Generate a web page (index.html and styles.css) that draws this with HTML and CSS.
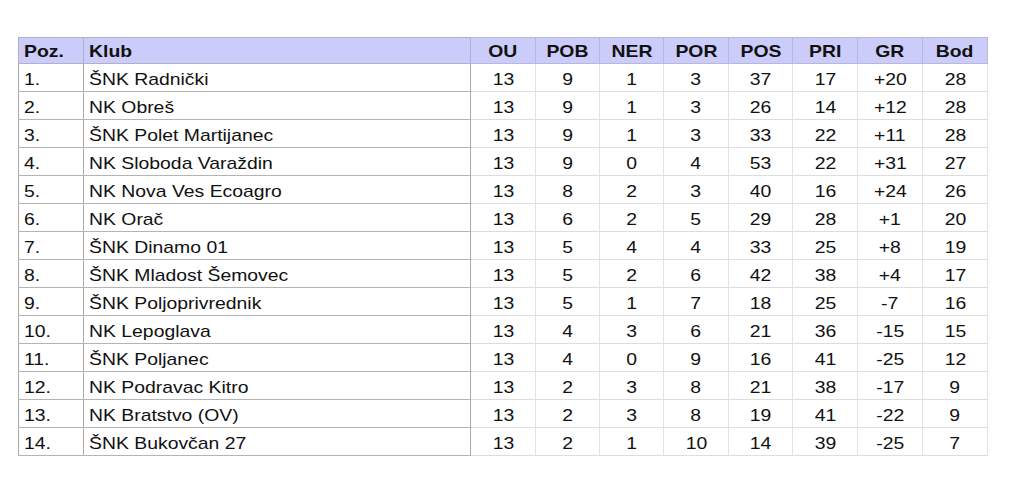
FILE: index.html
```html
<!DOCTYPE html>
<html lang="hr">
<head>
<meta charset="utf-8">
<title>Tablica</title>
<link rel="stylesheet" href="styles.css">
</head>
<body>
<div class="page">
<table class="standings">
<colgroup>
<col class="c-poz"><col class="c-klub"><col class="c-n65"><col class="c-n64"><col class="c-n64"><col class="c-n65"><col class="c-n64"><col class="c-n65"><col class="c-n65"><col class="c-n65">
</colgroup>
<thead>
<tr>
<th class="l"><span>Poz.</span></th><th class="l klub"><span>Klub</span></th><th><span>OU</span></th><th><span>POB</span></th><th><span>NER</span></th><th><span>POR</span></th><th><span>POS</span></th><th><span>PRI</span></th><th><span>GR</span></th><th><span>Bod</span></th>
</tr>
</thead>
<tbody>
<tr><td class="l"><span>1.</span></td><td class="l klub"><span>ŠNK Radnički</span></td><td><span>13</span></td><td><span>9</span></td><td><span>1</span></td><td><span>3</span></td><td><span>37</span></td><td><span>17</span></td><td><span>+20</span></td><td><span>28</span></td></tr>
<tr><td class="l"><span>2.</span></td><td class="l klub"><span>NK Obreš</span></td><td><span>13</span></td><td><span>9</span></td><td><span>1</span></td><td><span>3</span></td><td><span>26</span></td><td><span>14</span></td><td><span>+12</span></td><td><span>28</span></td></tr>
<tr><td class="l"><span>3.</span></td><td class="l klub"><span>ŠNK Polet Martijanec</span></td><td><span>13</span></td><td><span>9</span></td><td><span>1</span></td><td><span>3</span></td><td><span>33</span></td><td><span>22</span></td><td><span>+11</span></td><td><span>28</span></td></tr>
<tr><td class="l"><span>4.</span></td><td class="l klub"><span>NK Sloboda Varaždin</span></td><td><span>13</span></td><td><span>9</span></td><td><span>0</span></td><td><span>4</span></td><td><span>53</span></td><td><span>22</span></td><td><span>+31</span></td><td><span>27</span></td></tr>
<tr><td class="l"><span>5.</span></td><td class="l klub"><span>NK Nova Ves Ecoagro</span></td><td><span>13</span></td><td><span>8</span></td><td><span>2</span></td><td><span>3</span></td><td><span>40</span></td><td><span>16</span></td><td><span>+24</span></td><td><span>26</span></td></tr>
<tr><td class="l"><span>6.</span></td><td class="l klub"><span>NK Orač</span></td><td><span>13</span></td><td><span>6</span></td><td><span>2</span></td><td><span>5</span></td><td><span>29</span></td><td><span>28</span></td><td><span>+1</span></td><td><span>20</span></td></tr>
<tr><td class="l"><span>7.</span></td><td class="l klub"><span>ŠNK Dinamo 01</span></td><td><span>13</span></td><td><span>5</span></td><td><span>4</span></td><td><span>4</span></td><td><span>33</span></td><td><span>25</span></td><td><span>+8</span></td><td><span>19</span></td></tr>
<tr><td class="l"><span>8.</span></td><td class="l klub"><span>ŠNK Mladost Šemovec</span></td><td><span>13</span></td><td><span>5</span></td><td><span>2</span></td><td><span>6</span></td><td><span>42</span></td><td><span>38</span></td><td><span>+4</span></td><td><span>17</span></td></tr>
<tr><td class="l"><span>9.</span></td><td class="l klub"><span>ŠNK Poljoprivrednik</span></td><td><span>13</span></td><td><span>5</span></td><td><span>1</span></td><td><span>7</span></td><td><span>18</span></td><td><span>25</span></td><td><span>-7</span></td><td><span>16</span></td></tr>
<tr><td class="l"><span>10.</span></td><td class="l klub"><span>NK Lepoglava</span></td><td><span>13</span></td><td><span>4</span></td><td><span>3</span></td><td><span>6</span></td><td><span>21</span></td><td><span>36</span></td><td><span>-15</span></td><td><span>15</span></td></tr>
<tr><td class="l"><span>11.</span></td><td class="l klub"><span>ŠNK Poljanec</span></td><td><span>13</span></td><td><span>4</span></td><td><span>0</span></td><td><span>9</span></td><td><span>16</span></td><td><span>41</span></td><td><span>-25</span></td><td><span>12</span></td></tr>
<tr><td class="l"><span>12.</span></td><td class="l klub"><span>NK Podravac Kitro</span></td><td><span>13</span></td><td><span>2</span></td><td><span>3</span></td><td><span>8</span></td><td><span>21</span></td><td><span>38</span></td><td><span>-17</span></td><td><span>9</span></td></tr>
<tr><td class="l"><span>13.</span></td><td class="l klub"><span>NK Bratstvo (OV)</span></td><td><span>13</span></td><td><span>2</span></td><td><span>3</span></td><td><span>8</span></td><td><span>19</span></td><td><span>41</span></td><td><span>-22</span></td><td><span>9</span></td></tr>
<tr><td class="l"><span>14.</span></td><td class="l klub"><span>ŠNK Bukovčan 27</span></td><td><span>13</span></td><td><span>2</span></td><td><span>1</span></td><td><span>10</span></td><td><span>14</span></td><td><span>39</span></td><td><span>-25</span></td><td><span>7</span></td></tr>
</tbody>
</table>
</div>
</body>
</html>
```

FILE: styles.css
```css
html, body {
  margin: 0;
  padding: 0;
  background: #ffffff;
}

body {
  font-family: "Liberation Sans", Arial, sans-serif;
  color: #111111;
}

.page {
  padding: 37px 0 0 18px;
}

.standings {
  border-collapse: collapse;
  table-layout: fixed;
  width: 969px;
  border: 1px solid #9a9a9a;
}

.c-poz { width: 65px; }
.c-klub { width: 387px; }
.c-n65 { width: 65px; }
.c-n64 { width: 64px; }

.standings th,
.standings td {
  font-size: 17px;
  line-height: 20px;
  text-align: center;
  white-space: nowrap;
  overflow: visible;
  padding: 6px 5px 1px;
  border-top: 1px solid #dddddd;
  border-bottom: 1px solid #dddddd;
  border-left: 1px solid #e2e2e2;
  border-right: 1px solid #e2e2e2;
}

.standings th {
  font-weight: bold;
  background: #ccccfa;
  padding-top: 4px;
  height: 20px;
  border-color: #b8b8d8;
}

.standings td {
  height: 20px;
}

.standings .l {
  text-align: left;
  border-left-color: #a8a8a8;
  border-right-color: #a8a8a8;
  border-top-color: #b4b4b4;
  border-bottom-color: #b4b4b4;
}

.standings th.l {
  border-color: #b0b0c8;
}

.standings span {
  display: inline-block;
  transform: scaleX(1.14);
  transform-origin: center;
}

.standings .l span {
  transform-origin: left;
}
```
